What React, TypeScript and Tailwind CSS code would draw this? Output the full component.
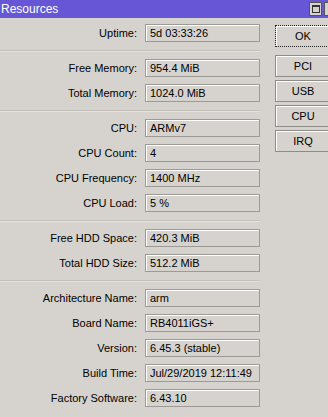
import React from 'react';

type Row = { label: string; value: string };

const groups: Row[][] = [
  [{ label: 'Uptime:', value: '5d 03:33:26' }],
  [
    { label: 'Free Memory:', value: '954.4 MiB' },
    { label: 'Total Memory:', value: '1024.0 MiB' },
  ],
  [
    { label: 'CPU:', value: 'ARMv7' },
    { label: 'CPU Count:', value: '4' },
    { label: 'CPU Frequency:', value: '1400 MHz' },
    { label: 'CPU Load:', value: '5 %' },
  ],
  [
    { label: 'Free HDD Space:', value: '420.3 MiB' },
    { label: 'Total HDD Size:', value: '512.2 MiB' },
  ],
  [
    { label: 'Architecture Name:', value: 'arm' },
    { label: 'Board Name:', value: 'RB4011iGS+' },
    { label: 'Version:', value: '6.45.3 (stable)' },
    { label: 'Build Time:', value: 'Jul/29/2019 12:11:49' },
    { label: 'Factory Software:', value: '6.43.10' },
  ],
];

function Field({ label, value }: Row) {
  return (
    <div className="flex items-center h-[18px]">
      <div className="w-[138px] text-right pr-[1px] text-black">{label}</div>
      <div className="ml-[7px] w-[115px] h-[18px] border border-[#9c9a94] bg-[#d6d3ce] shadow-[inset_1px_1px_0_#ffffff] flex items-center pl-[4px] text-black whitespace-nowrap overflow-hidden">
        {value}
      </div>
    </div>
  );
}

function SideButton({ label, focused }: { label: string; focused?: boolean }) {
  return (
    <button
      className={`w-[56px] h-[22px] flex items-center justify-center text-black bg-[#d6d3ce] ${
        focused
          ? 'border border-dotted border-[#222] shadow-[inset_1px_1px_0_#ffffff]'
          : 'border border-[#8e8c86] shadow-[inset_1px_1px_0_#ffffff]'
      }`}
    >
      {label}
    </button>
  );
}

export default function App() {
  return (
    <div
      className="w-[328px] h-[417px] overflow-hidden bg-[#d6d3ce] text-[11px] flex flex-col"
      style={{ fontFamily: '"Liberation Sans", Arial, sans-serif' }}
    >
      <div className="h-[18px] bg-[#6757d6] flex items-center justify-between shrink-0">
        <span className="text-white text-[12px] pl-[1px] leading-none">Resources</span>
        <div className="flex gap-[2px] pr-0">
          <div className="w-[13px] h-[14px] bg-[#d6d3ce] border border-[#555] flex items-center justify-center">
            <div className="w-[8px] h-[8px] border border-[#333] border-t-2" />
          </div>
          <div className="w-[4px] h-[14px] bg-[#d6d3ce] border border-[#555] border-r-0" />
        </div>
      </div>
      <div className="flex flex-1">
        <div className="w-[262px] pt-[6px] flex flex-col">
          {groups.map((g, gi) => (
            <div key={gi} className="flex flex-col">
              {gi > 0 && (
                <div className="mt-[8px] mb-[7px] h-[2px] border-t border-[#c4c1ba] border-b border-b-[#e4e2de] w-[260px]" />
              )}
              <div className="flex flex-col gap-[7px]">
                {g.map((r) => (
                  <Field key={r.label} {...r} />
                ))}
              </div>
            </div>
          ))}
        </div>
        <div className="flex flex-col pl-[15px] pt-[7px]">
          <SideButton label="OK" focused />
          <div className="flex flex-col gap-[3px] mt-[8px]">
            <SideButton label="PCI" />
            <SideButton label="USB" />
            <SideButton label="CPU" />
            <SideButton label="IRQ" />
          </div>
        </div>
      </div>
    </div>
  );
}
